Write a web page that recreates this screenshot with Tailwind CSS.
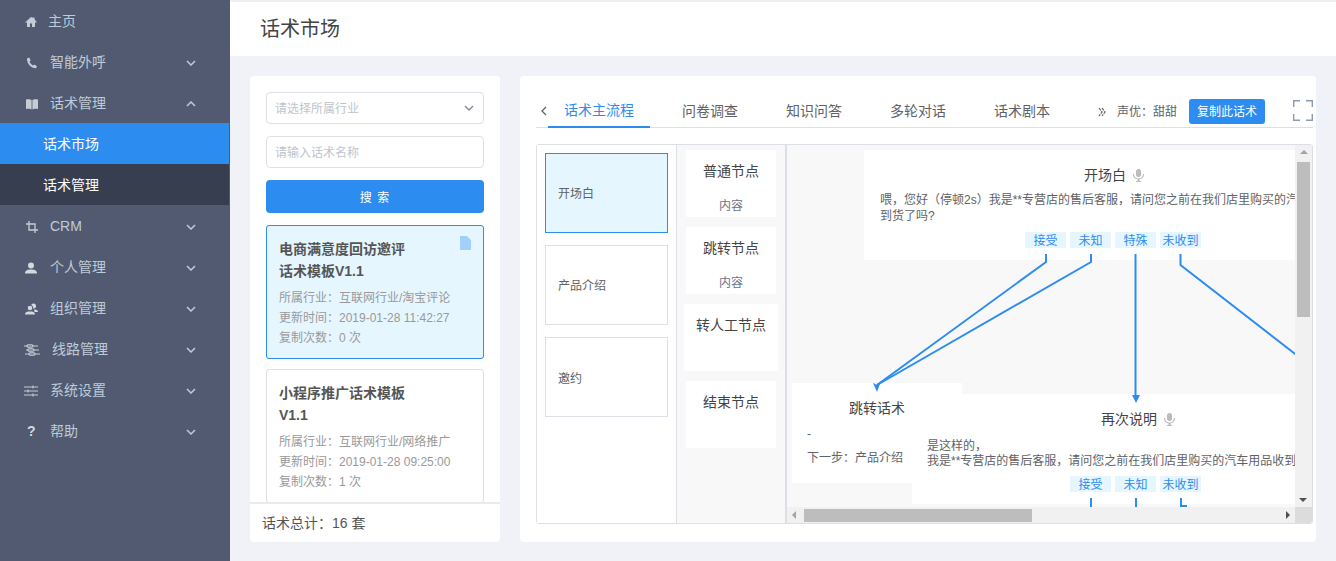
<!DOCTYPE html>
<html lang="zh-CN">
<head>
    <meta charset="UTF-8">
    <title>话术市场</title>
    <script src="https://cdn.jsdelivr.net/npm/@tailwindcss/browser@4"></script>
</head>
<body class="w-[1336px] h-[561px] overflow-hidden flex bg-[#f0f2f7] text-[#606266] font-['Liberation_Sans','Noto_Sans_CJK_SC',sans-serif]">
    <!-- Sidebar -->
    <aside class="w-[230px] h-full shrink-0 bg-[#515a70] text-[14px] text-[#bfcbd9]">
        <div class="h-[41px] flex items-center pt-[2px] pl-[25px]">
            <svg class="w-3 h-3 mr-[11px]" viewBox="0 0 12 12" fill="#c6ccd6"><path d="M6 1 0.3 6.2l.7.7L2 6v5h3V7.500h2V11h3V6l1 .9.7-.7L9.500 3V1.500H8V1.700L6 1z"/></svg>
            <span>主页</span>
        </div>
        <div class="h-[41px] flex items-center pt-[2px] pl-[26px] pr-[34px]">
            <svg class="w-3 h-3 mr-3" viewBox="0 0 12 12" fill="#c6ccd6"><path d="M1 1.500 3.200.6 4.700 3.500 3.500 4.500C4 6 5.500 7.800 7 8.500l1.200-1.100L11 9.300 10 11.200C5.500 11.500.5 6.500 1 1.500z"/></svg>
            <span class="flex-1">智能外呼</span>
            <svg class="w-[10px] h-[6px]" viewBox="0 0 10 6" fill="none" stroke="#bfcbd9" stroke-width="1.500"><path d="M1 1l4 4 4-4"/></svg>
        </div>
        <div class="h-[41px] flex items-center pt-[2px] pl-[26px] pr-[34px]">
            <svg class="w-3 h-3 mr-3" viewBox="0 0 12 12" fill="#c6ccd6"><path d="M0 1.500C2 1 4.500 1 5.600 2.200V11.500C4.500 10.500 2 10.500 0 11zM12 1.500C10 1 7.500 1 6.400 2.200V11.500C7.500 10.500 10 10.500 12 11z"/></svg>
            <span class="flex-1">话术管理</span>
            <svg class="w-[10px] h-[6px]" viewBox="0 0 10 6" fill="none" stroke="#bfcbd9" stroke-width="1.500"><path d="M1 5l4-4 4 4"/></svg>
        </div>
        <div class="h-[41px] w-[229px] flex items-center pt-[2px] pl-[43px] bg-[#2d8cf0] text-white">话术市场</div>
        <div class="h-[41px] w-[229px] flex items-center pt-[2px] pl-[43px] bg-[#363e4f] text-white">话术管理</div>
        <div class="h-[41px] flex items-center pt-[2px] pl-[26px] pr-[34px]">
            <svg class="w-3 h-3 mr-3" viewBox="0 0 12 12" fill="none" stroke="#c6ccd6" stroke-width="1.300"><path d="M3 0v9h9M0 3h9v9"/></svg>
            <span class="flex-1">CRM</span>
            <svg class="w-[10px] h-[6px]" viewBox="0 0 10 6" fill="none" stroke="#bfcbd9" stroke-width="1.500"><path d="M1 1l4 4 4-4"/></svg>
        </div>
        <div class="h-[41px] flex items-center pt-[2px] pl-[25px] pr-[34px]">
            <svg class="w-3 h-3 mr-[13px]" viewBox="0 0 12 12" fill="#d4d8df"><circle cx="6" cy="3.500" r="3"/><path d="M0 11.500C0 8 3 7.500 6 7.500s6 .5 6 4z"/></svg>
            <span class="flex-1">个人管理</span>
            <svg class="w-[10px] h-[6px]" viewBox="0 0 10 6" fill="none" stroke="#bfcbd9" stroke-width="1.500"><path d="M1 1l4 4 4-4"/></svg>
        </div>
        <div class="h-[41px] flex items-center pt-[2px] pl-[25px] pr-[34px]">
            <svg class="w-[13px] h-3 mr-3" viewBox="0 0 13 12" fill="#d4d8df"><circle cx="8.500" cy="3" r="2.500"/><circle cx="5" cy="5" r="2.800" stroke="#515a70"/><path d="M9 6.500c2 0 4 .5 4 2.500H9.500zM0 11.500C0 9 2.500 8.500 5 8.500s5 .5 5 3z"/></svg>
            <span class="flex-1">组织管理</span>
            <svg class="w-[10px] h-[6px]" viewBox="0 0 10 6" fill="none" stroke="#bfcbd9" stroke-width="1.500"><path d="M1 1l4 4 4-4"/></svg>
        </div>
        <div class="h-[41px] flex items-center pt-[2px] pl-[24px] pr-[34px]">
            <svg class="w-4 h-3 mr-3" viewBox="0 0 16 12" fill="none" stroke="#c6ccd6" stroke-width="1.200"><path d="M0 2h3M9 2h5M2 6h2M10 6h5M1 10h4M11 10h5"/><rect x="3" y=".8" width="6" height="2.400" rx="1.200"/><rect x="4" y="4.800" width="6" height="2.400" rx="1.200"/><rect x="5" y="8.800" width="6" height="2.400" rx="1.200"/></svg>
            <span class="flex-1">线路管理</span>
            <svg class="w-[10px] h-[6px]" viewBox="0 0 10 6" fill="none" stroke="#bfcbd9" stroke-width="1.500"><path d="M1 1l4 4 4-4"/></svg>
        </div>
        <div class="h-[41px] flex items-center pt-[2px] pl-[24px] pr-[34px]">
            <svg class="w-[14px] h-3 mr-3" viewBox="0 0 14 12" fill="none" stroke="#c6ccd6" stroke-width="1.100"><path d="M0 2h14M0 6h14M0 10h14M9 .5v3M4 4.500v3M9 8.500v3"/></svg>
            <span class="flex-1">系统设置</span>
            <svg class="w-[10px] h-[6px]" viewBox="0 0 10 6" fill="none" stroke="#bfcbd9" stroke-width="1.500"><path d="M1 1l4 4 4-4"/></svg>
        </div>
        <div class="h-[41px] flex items-center pt-[2px] pl-[27px] pr-[34px]">
            <span class="w-[23px] font-bold text-[14px] text-[#d4d8df]">?</span>
            <span class="flex-1">帮助</span>
            <svg class="w-[10px] h-[6px]" viewBox="0 0 10 6" fill="none" stroke="#bfcbd9" stroke-width="1.500"><path d="M1 1l4 4 4-4"/></svg>
        </div>
    </aside>

    <!-- Main -->
    <div class="flex-1 flex flex-col min-w-0">
        <header class="h-[56px] shrink-0 bg-white border-t-2 border-[#f0f0f0] flex items-center pl-[30px] text-[20px] text-[#444]">话术市场</header>

        <main class="flex gap-5 pt-5 pl-5 pr-5">
            <!-- Script list -->
            <section class="w-[250px] h-[466px] bg-white rounded flex flex-col">
                <div class="flex-1 min-h-0 overflow-hidden pt-4 px-4">
                    <div class="h-8 border border-[#dcdfe6] rounded-[4px] flex items-center justify-between pt-[2px] px-2 text-[12px] text-[#c0c4cc]">
                        <span>请选择所属行业</span>
                        <svg class="w-[10px] h-[6px] mr-[1px] mb-[3px]" viewBox="0 0 10 6" fill="none" stroke="#7d8492" stroke-width="1.300"><path d="M1 1l4 4 4-4"/></svg>
                    </div>
                    <div class="h-8 mt-3 border border-[#dcdfe6] rounded-[4px] flex items-center pt-[2px] px-2 text-[12px] text-[#c0c4cc]">请输入话术名称</div>
                    <button class="w-full h-[33px] mt-3 pt-[2px] rounded-[4px] bg-[#2d8cf0] text-white text-[12px] tracking-[1px]">搜 索</button>
                    <div class="relative h-[134px] mt-3 border border-[#2d8cf0] rounded-[3px] bg-[#e6f6ff] pl-3 pt-[12px]">
                        <svg class="absolute right-[12px] top-[10px] w-[11px] h-[14px]" viewBox="0 0 11 14" fill="#a3d0fa"><path d="M0 0h7l4 4v10H0z"/></svg>
                        <h3 class="text-[14px] leading-[22px] font-bold text-[#555]">电商满意度回访邀评<br>话术模板V1.1</h3>
                        <div class="mt-[6px] text-[12px] leading-[20px] text-[#999]">
                            <p>所属行业：互联网行业/淘宝评论</p>
                            <p>更新时间：2019-01-28 11:42:27</p>
                            <p>复制次数：0 次</p>
                        </div>
                    </div>
                    <div class="h-[134px] mt-[10px] border border-[#dcdfe6] rounded-[3px] pl-3 pt-[12px]">
                        <h3 class="text-[14px] leading-[22px] font-bold text-[#555]">小程序推广话术模板<br>V1.1</h3>
                        <div class="mt-[6px] text-[12px] leading-[20px] text-[#999]">
                            <p>所属行业：互联网行业/网络推广</p>
                            <p>更新时间：2019-01-28 09:25:00</p>
                            <p>复制次数：1 次</p>
                        </div>
                    </div>
                </div>
                <div class="h-[40px] shrink-0 border-t-2 border-[#eaeaea] flex items-center pl-3 text-[14px] text-[#555]">话术总计：16 套</div>
            </section>

            <!-- Flow -->
            <section class="w-[796px] h-[466px] bg-white rounded pl-4 pr-[3px] pt-5">
                <div class="h-[32px] flex items-center border-b border-[#dcdfe6] relative text-[14px]">
                    <svg class="w-[6px] h-[10px] ml-[5px] mb-[1px] shrink-0" viewBox="0 0 6 10" fill="none" stroke="#606266" stroke-width="1.300"><path d="M5 1 1 5l4 4"/></svg>
                    <div class="ml-[1px] w-[102px] h-[32px] shrink-0 flex items-center justify-center text-[#2d8cf0] border-b-2 border-[#2d8cf0]">话术主流程</div>
                    <span class="ml-[32px] w-[56px] shrink-0">问卷调查</span>
                    <span class="ml-[48px] w-[56px] shrink-0">知识问答</span>
                    <span class="ml-[48px] w-[56px] shrink-0">多轮对话</span>
                    <span class="ml-[48px] w-[56px] shrink-0">话术剧本</span>
                    <svg class="ml-[48px] w-[8px] h-[10px] shrink-0" viewBox="0 0 8 10" fill="none" stroke="#606266" stroke-width="1.200"><path d="M1 1l3 4-3 4M4 1l3 4-3 4" stroke-dasharray="3 1"/></svg>
                    <span class="ml-[11px] w-[60px] shrink-0 whitespace-nowrap text-[12px]">声优：甜甜</span>
                    <button class="ml-[12px] w-[76px] h-[25px] shrink-0 rounded-[3px] bg-[#2d8cf0] text-white text-[12px]">复制此话术</button>
                    <svg class="ml-[28px] mb-[3px] w-[20px] h-[21px] shrink-0" viewBox="0 0 20 21" fill="none" stroke="#8d9bb0" stroke-width="1.400"><path d="M.7 7V.7H7M13 .7h6.300V7M.7 14v6.300H7M13 20.300h6.300V14"/></svg>
                </div>

                <div class="mt-4 w-[777px] h-[380px] border border-[#dcdfe6] rounded-[3px] flex overflow-hidden">
                    <div class="w-[140px] shrink-0 bg-white border-r border-[#dcdfe6] pl-2 pt-2 text-[12px] text-[#606266]">
                        <div class="w-[123px] h-[80px] border border-[#2d8cf0] bg-[#e6f6ff] flex items-center pt-[2px] pl-3">开场白</div>
                        <div class="w-[123px] h-[80px] mt-3 border border-[#dcdfe6] flex items-center pt-[2px] pl-3">产品介绍</div>
                        <div class="w-[123px] h-[80px] mt-3 border border-[#dcdfe6] flex items-center pt-[3px] pl-3">邀约</div>
                    </div>
                    <div class="w-[110px] shrink-0 bg-[#f8f8f8] border-r-2 border-[#dcdfe6] pt-[5px] flex flex-col items-center gap-[10px]">
                        <div class="w-[90px] h-[67px] bg-white text-center">
                            <p class="text-[14px] text-[#444] pt-[11px]">普通节点</p>
                            <p class="text-[12px] text-[#6b7285] mt-[15px]">内容</p>
                        </div>
                        <div class="w-[90px] h-[67px] bg-white text-center">
                            <p class="text-[14px] text-[#444] pt-[11px]">跳转节点</p>
                            <p class="text-[12px] text-[#6b7285] mt-[15px]">内容</p>
                        </div>
                        <div class="w-[94px] h-[67px] bg-white text-center">
                            <p class="text-[14px] text-[#444] pt-[11px]">转人工节点</p>
                        </div>
                        <div class="w-[90px] h-[67px] bg-white text-center">
                            <p class="text-[14px] text-[#444] pt-[11px]">结束节点</p>
                        </div>
                    </div>

                    <!-- Canvas: x 787, y 145 in page coords -->
                    <div class="relative flex-1 bg-[#f8f8f8] overflow-hidden">
                        <div class="absolute left-[77px] top-[5px] w-[432px] h-[110px] bg-white overflow-hidden">
                            <div class="mt-[15px] ml-[220px] flex items-center text-[14px] text-[#444]">开场白
                                <svg class="ml-[7px] w-[11px] h-[13px]" viewBox="0 0 11 13" fill="#bbb"><rect x="3" y="0" width="5" height="8" rx="2.500"/><path d="M1 5c0 6 9 6 9 0h1c0 3.500-2 5-4.500 5.300V12H8v1H3v-1h1.500v-1.700C2 10 0 8.500 0 5z"/></svg>
                            </div>
                            <p class="absolute left-4 top-[42px] whitespace-nowrap text-[12px] leading-[16px] text-[#606266]">喂，您好（停顿2s）我是**专营店的售后客服，请问您之前在我们店里购买的汽车用品收<br>到货了吗?</p>
                            <div class="absolute left-[161px] top-[82px] h-4 flex gap-1 text-[12px] leading-[18px] text-[#2d8cf0] text-center">
                                <span class="w-[41px] bg-[#e6f6ff]">接受</span>
                                <span class="w-[41px] bg-[#e6f6ff]">未知</span>
                                <span class="w-[41px] bg-[#e6f6ff]">特殊</span>
                                <span class="w-[41px] bg-[#e6f6ff]">未收到</span>
                            </div>
                        </div>

                        <div class="absolute left-[5px] top-[238px] w-[170px] h-[100px] bg-white">
                            <p class="mt-[15px] ml-[57px] text-[14px] text-[#444]">跳转话术</p>
                            <p class="mt-[6px] ml-[15px] text-[12px] text-[#606266]">-</p>
                            <p class="mt-[6px] ml-[15px] text-[12px] text-[#606266]">下一步：产品介绍</p>
                        </div>

                        <div class="absolute left-[125px] top-[249px] w-[384px] h-[110px] bg-white overflow-hidden">
                            <div class="mt-[15px] ml-[189px] flex items-center text-[14px] text-[#444]">再次说明
                                <svg class="ml-[7px] w-[11px] h-[13px]" viewBox="0 0 11 13" fill="#bbb"><rect x="3" y="0" width="5" height="8" rx="2.500"/><path d="M1 5c0 6 9 6 9 0h1c0 3.500-2 5-4.500 5.300V12H8v1H3v-1h1.500v-1.700C2 10 0 8.500 0 5z"/></svg>
                            </div>
                            <p class="absolute left-[15px] top-[45px] whitespace-nowrap text-[12px] leading-[15px] text-[#606266]">是这样的，<br>我是**专营店的售后客服，请问您之前在我们店里购买的汽车用品收到货了吗</p>
                            <div class="absolute left-[158px] top-[82px] h-4 flex gap-1 text-[12px] leading-[18px] text-[#2d8cf0] text-center">
                                <span class="w-[41px] bg-[#e6f6ff]">接受</span>
                                <span class="w-[41px] bg-[#e6f6ff]">未知</span>
                                <span class="w-[41px] bg-[#e6f6ff]">未收到</span>
                            </div>
                        </div>

                        <svg class="absolute left-0 top-0 w-[525px] h-[378px]" viewBox="0 0 525 378" fill="none" stroke="#2d8cf0" stroke-width="2">
                            <path d="M259 109v8L90 240"/>
                            <path d="M304 109v8L90 240"/>
                            <path d="M348.500 109v143"/>
                            <path d="M393.500 109v11l116 90"/>
                            <path d="M304 353v9M349 353v9M394 353v9M394 361h6"/>
                            <path fill="#2d8cf0" stroke="none" d="M90 247 86 238 90 240 94 236z"/>
                            <path fill="#2d8cf0" stroke="none" d="M349 258l-4-8h8z"/>
                        </svg>

                        <!-- Scrollbars -->
                        <div class="absolute right-0 top-0 w-[17px] h-[362px] bg-[#f1f1f1]">
                            <div class="mx-auto mt-[5px] w-0 h-0 border-x-[4px] border-x-transparent border-b-[4px] border-b-[#a3a3a3]"></div>
                            <div class="absolute left-[2px] top-[17px] w-[13px] h-[155px] bg-[#bdbdbd]"></div>
                            <div class="absolute left-[4px] bottom-[5px] w-0 h-0 border-x-[4px] border-x-transparent border-t-[4px] border-t-[#505050]"></div>
                        </div>
                        <div class="absolute left-0 bottom-0 w-[508px] h-[16px] bg-[#f1f1f1]">
                            <div class="absolute left-[5px] top-[4px] w-0 h-0 border-y-[4px] border-y-transparent border-r-[4px] border-r-[#a3a3a3]"></div>
                            <div class="absolute left-[17px] top-[2px] w-[228px] h-[13px] bg-[#bdbdbd]"></div>
                            <div class="absolute right-[5px] top-[4px] w-0 h-0 border-y-[4px] border-y-transparent border-l-[4px] border-l-[#505050]"></div>
                        </div>
                        <div class="absolute right-0 bottom-0 w-[17px] h-[16px] bg-[#dcdcdc]"></div>
                    </div>
                </div>
            </section>
        </main>
    </div>
</body>
</html>
